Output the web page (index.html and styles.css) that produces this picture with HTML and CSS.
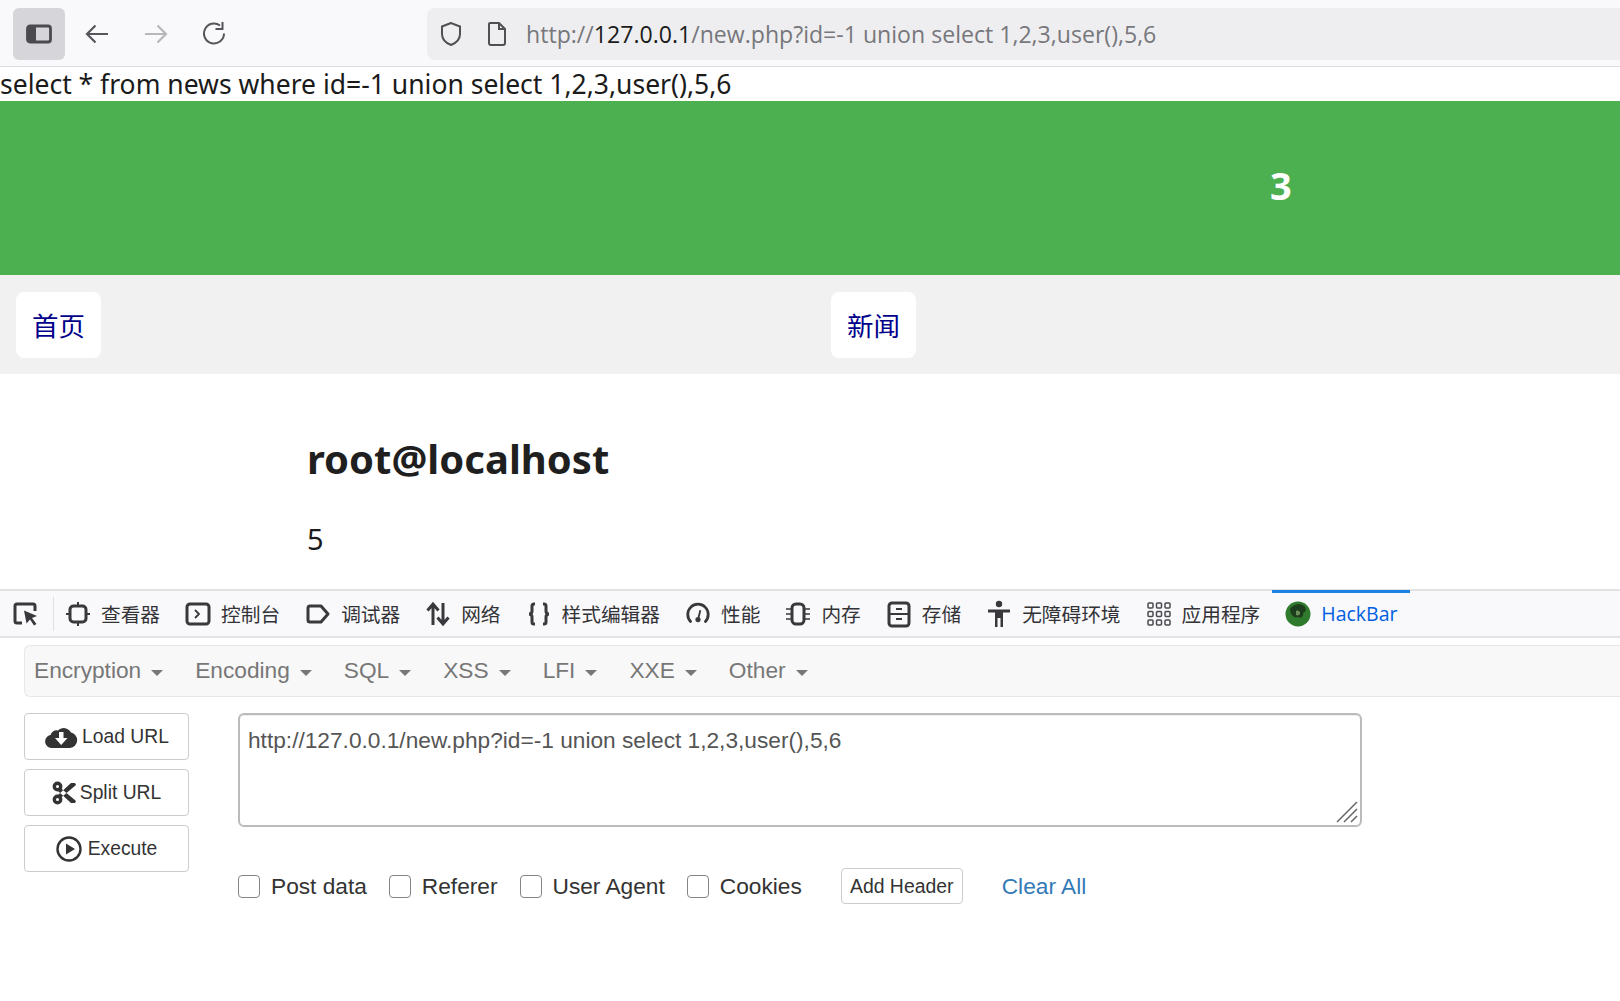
FILE: index.html
```html
<!DOCTYPE html>
<html lang="zh">
<head>
<meta charset="utf-8">
<title>new.php</title>
<link rel="stylesheet" href="styles.css">
</head>
<body>
<header class="browser">
  <div class="sidebar-btn"><svg width="26" height="20" viewBox="0 0 26 20"><rect x="1.500" y="2" width="23" height="16" rx="2.500" fill="none" stroke="#4a4a4f" stroke-width="2.800"/><rect x="2" y="3" width="8" height="14" fill="#4a4a4f"/></svg></div>
  <svg class="nav-icon nav-back" width="28" height="24" viewBox="0 0 28 24"><path d="M25 12H4M12.500 3.500 4 12l8.500 8.500" fill="none" stroke="#55555a" stroke-width="2.200"/></svg>
  <svg class="nav-icon nav-forward" width="28" height="24" viewBox="0 0 28 24"><path d="M3 12h21M15.500 3.500 24 12l-8.500 8.500" fill="none" stroke="#b8b8bc" stroke-width="2.200"/></svg>
  <svg class="nav-icon nav-reload" width="28" height="28" viewBox="0 0 28 28"><path d="M24 13.500A10 10 0 1 1 20 5.500M22.500 2v7h-7" fill="none" stroke="#55555a" stroke-width="2"/></svg>
  <div class="urlbar">
    <svg class="shield" width="24" height="28" viewBox="0 0 24 28"><path d="M12 3 3 6.500V14c0 5.500 4 9 9 11 5-2 9-5.500 9-11V6.500Z" fill="none" stroke="#4f4f54" stroke-width="2"/></svg>
    <svg class="page-icon" width="22" height="26" viewBox="0 0 22 26"><path d="M4 2h9l6 6v14a2 2 0 0 1-2 2H5a2 2 0 0 1-2-2V3a1 1 0 0 1 1-1ZM13 2v6h6" fill="none" stroke="#4f4f54" stroke-width="2"/></svg>
    <span class="url"><span class="dim">http://</span>127.0.0.1<span class="dim">/new.php?id=-1 union select 1,2,3,user(),5,6</span></span>
  </div>
</header>

<main class="page">
  <div class="query">select * from news where id=-1 union select 1,2,3,user(),5,6</div>
  <div class="banner"><span class="banner-num">3</span></div>
  <nav class="site-nav">
    <a class="site-link" href="#">首页</a>
    <a class="site-link" href="#">新闻</a>
  </nav>
  <article class="article">
    <h2 class="article-title">root@localhost</h2>
    <p class="article-body">5</p>
  </article>
</main>

<section class="devtools">
  <div class="tabs">
    <span class="picker"><svg width="28" height="28" viewBox="0 0 28 28"><path d="M10 23H5a2 2 0 0 1-2-2V6a2 2 0 0 1 2-2h16a2 2 0 0 1 2 2v5" fill="none" stroke="#38383d" stroke-width="3"/><path d="M12 10.500 25 16l-5 2 4.500 6-2.500 1.500-4-6-3.500 4Z" fill="#38383d"/></svg></span>
    <span class="tab"><svg width="26" height="28" viewBox="0 0 26 28"><rect x="5" y="6" width="16" height="16" rx="3.500" fill="none" stroke="#38383d" stroke-width="3"/><path d="M13 2v4M13 22v4M1 14h4M21 14h4" stroke="#38383d" stroke-width="2"/></svg>查看器</span>
    <span class="tab"><svg width="26" height="28" viewBox="0 0 26 28"><rect x="2" y="4" width="22" height="20" rx="3" fill="none" stroke="#38383d" stroke-width="3"/><path d="m10 10 4 4-4 4" fill="none" stroke="#38383d" stroke-width="1.800"/></svg>控制台</span>
    <span class="tab"><svg width="26" height="28" viewBox="0 0 26 28"><path d="M5 6h11l7 8-7 8H5a2 2 0 0 1-2-2V8a2 2 0 0 1 2-2Z" fill="none" stroke="#38383d" stroke-width="3" stroke-linejoin="round"/></svg>调试器</span>
    <span class="tab"><svg width="26" height="28" viewBox="0 0 26 28"><path d="M8 25V5M2.500 10.500 8 4l5.500 6.500M18 3v20M12.500 17.500 18 24l5.500-6.500" fill="none" stroke="#38383d" stroke-width="3"/></svg>网络</span>
    <span class="tab"><svg width="26" height="28" viewBox="0 0 26 28"><path d="M9 4H8a2 2 0 0 0-2 2v5c0 2-1 3-3 3 2 0 3 1 3 3v5a2 2 0 0 0 2 2h1M17 4h1a2 2 0 0 1 2 2v5c0 2 1 3 3 3-2 0-3 1-3 3v5a2 2 0 0 1-2 2h-1" fill="none" stroke="#38383d" stroke-width="3"/></svg>样式编辑器</span>
    <span class="tab"><svg width="26" height="28" viewBox="0 0 28 28"><path d="M6 22A11 11 0 1 1 22 22" fill="none" stroke="#38383d" stroke-width="3" stroke-linecap="round"/><path d="m16.500 10-2 8" stroke="#38383d" stroke-width="2"/><circle cx="14" cy="20" r="2.800" fill="#38383d"/></svg>性能</span>
    <span class="tab"><svg width="26" height="28" viewBox="0 0 26 28"><rect x="7" y="4" width="12" height="20" rx="4" fill="none" stroke="#38383d" stroke-width="3"/><path d="M1 9h5M1 14h5M1 19h5M20 9h5M20 14h5M20 19h5" stroke="#38383d" stroke-width="1.500"/></svg>内存</span>
    <span class="tab"><svg width="26" height="28" viewBox="0 0 26 28"><rect x="3" y="3" width="20" height="23" rx="3" fill="none" stroke="#38383d" stroke-width="3"/><path d="M3 14h20M10 9h6M10 19h6" stroke="#38383d" stroke-width="2"/></svg>存储</span>
    <span class="tab"><svg width="26" height="30" viewBox="0 0 26 30"><circle cx="13" cy="5" r="3.200" fill="#38383d"/><path d="M2 10.500h22v3h-7V28h-2.500v-9h-3v9H9V13.500H2Z" fill="#38383d"/></svg>无障碍环境</span>
    <span class="tab"><svg width="26" height="26" viewBox="-1 -1 26 26"><g fill="none" stroke="#4a4a4f" stroke-width="1.500"><rect x="1" y="1" width="5" height="5" rx="1"/><rect x="9.500" y="1" width="5" height="5" rx="1"/><rect x="18" y="1" width="5" height="5" rx="1"/><rect x="1" y="9.500" width="5" height="5" rx="1"/><rect x="9.500" y="9.500" width="5" height="5" rx="1"/><rect x="18" y="9.500" width="5" height="5" rx="1"/><rect x="1" y="18" width="5" height="5" rx="1"/><rect x="9.500" y="18" width="5" height="5" rx="1"/><rect x="18" y="18" width="5" height="5" rx="1"/></g></svg>应用程序</span>
    <span class="tab tab-active"><svg width="26" height="26" viewBox="0 0 26 26"><circle cx="13" cy="13" r="12.500" fill="#2f7a2d"/><path d="M5 8c3-5 10-6 14-3 3 3 2 6-1 7 1 3-2 6-5 4-3 1-7 0-8-8Z" fill="#1d3d1c"/><path d="M11 10c2-1 4 0 4 2s-2 3-4 2Z" fill="#6c8f5a"/></svg>HackBar</span>
  </div>
  <div class="hackbar">
    <div class="menu">
      <span class="menu-item">Encryption<i class="caret"></i></span>
      <span class="menu-item">Encoding<i class="caret"></i></span>
      <span class="menu-item">SQL<i class="caret"></i></span>
      <span class="menu-item">XSS<i class="caret"></i></span>
      <span class="menu-item">LFI<i class="caret"></i></span>
      <span class="menu-item">XXE<i class="caret"></i></span>
      <span class="menu-item">Other<i class="caret"></i></span>
    </div>
    <div class="work">
      <div class="actions">
        <button class="action"><svg width="34" height="24" viewBox="0 0 34 24"><path d="M7.500 23a6.500 6.500 0 0 1-1-12.900 6 6 0 0 1 7.500-4.500 8 8 0 0 1 13 2 7.800 7.800 0 0 1-1 15.400Z" fill="#333"/><path d="M15 7h4.500v6h4L17.200 20 11 13h4Z" fill="#fff"/></svg>Load URL</button>
        <button class="action"><svg width="24" height="24" viewBox="0 0 24 24"><g fill="none" stroke="#333" stroke-width="3.400"><circle cx="5.500" cy="5.500" r="3.200"/><circle cx="5.500" cy="18.500" r="3.200"/></g><path d="M8 6.500 24 20l-1 2h-4L6 10ZM8 17.500 24 4l-1-2h-4L6 14Z" fill="#333"/></svg>Split URL</button>
        <button class="action action-run"><svg width="26" height="26" viewBox="0 0 26 26"><circle cx="13" cy="13" r="11.500" fill="none" stroke="#333" stroke-width="2.400"/><path d="M10 7.500 19 13l-9 5.500Z" fill="#333"/></svg>Execute</button>
      </div>
      <div class="form">
        <div class="url-box">http://127.0.0.1/new.php?id=-1 union select 1,2,3,user(),5,6<svg class="grip" width="24" height="24" viewBox="0 0 24 24"><path d="M2 22 22 2M9 22 22 9M16 22l6-6" stroke="#666" stroke-width="1.500"/></svg></div>
        <div class="options">
          <label class="opt"><i class="box"></i>Post data</label>
          <label class="opt"><i class="box"></i>Referer</label>
          <label class="opt"><i class="box"></i>User Agent</label>
          <label class="opt"><i class="box"></i>Cookies</label>
          <button class="add-header">Add Header</button>
          <a class="clear" href="#">Clear All</a>
        </div>
      </div>
    </div>
  </div>
</section>
</body>
</html>
```

FILE: styles.css
```css
* { box-sizing: border-box; }
html, body { margin: 0; padding: 0; }
body { width: 1620px; height: 1001px; overflow: hidden; background: #fff; font-family: "Noto Sans", "Noto Sans CJK SC", sans-serif; color: #1b1b1b; }

.browser { height: 67px; background: #f9f9fb; border-bottom: 1px solid #dcdce0; display: flex; align-items: center; padding: 2px 0 0 13px; }
.sidebar-btn { width: 52px; height: 52px; background: #d6d6da; border-radius: 6px; display: flex; align-items: center; justify-content: center; flex: none; }
.nav-icon { flex: none; }
.nav-back { margin-left: 18px; }
.nav-forward { margin-left: 31px; }
.nav-reload { margin-left: 30px; }
.urlbar { flex: 1; height: 52px; margin-left: 199px; background: #eeeef0; border-radius: 8px 0 0 8px; display: flex; align-items: center; padding-left: 12px; }
.page-icon { margin-left: 23px; }
.url { font-size: 23.100px; color: #1b1b1b; font-family: "Open Sans", sans-serif; margin-left: 18px; white-space: nowrap; }
.dim { color: #77777c; }

.query { height: 34px; line-height: 34px; font-size: 26.500px; white-space: nowrap; color: #1b1b1b; }
.banner { height: 174px; background: #4caf50; display: flex; align-items: center; padding: 0 0 6px 1270px; }
.banner-num { color: #fff; font-size: 38px; font-weight: 700; }
.site-nav { height: 99px; background: #f1f1f1; display: grid; grid-template-columns: 815px 85px; padding-left: 16px; align-items: start; padding-top: 17px; }
.site-link { display: block; width: fit-content; height: 66px; line-height: 66px; padding: 0 16px; background: #fff; border-radius: 8px; color: #00008b; font-size: 26.500px; font-family: "Noto Sans CJK SC", sans-serif; text-decoration: none; white-space: nowrap; }
.article { height: 215px; padding: 59px 0 0 307px; }
.article-title { margin: 0; font-size: 40px; line-height: 52px; font-weight: 700; color: #1f1f1f; }
.article-body { margin: 34px 0 0; font-size: 29px; line-height: 40px; }

.devtools { height: 412px; border-top: 2px solid #e2e2e4; }
.tabs { height: 47px; background: #f9f9fb; border-bottom: 2px solid #e4e4e6; display: flex; align-items: center; padding-left: 12px; font-size: 19.700px; font-family: "Noto Sans CJK SC", sans-serif; color: #333337; }
.picker { display: flex; padding-right: 13px; border-right: 1px solid #e0e0e2; height: 34px; align-items: center; }
.tab { display: flex; align-items: center; gap: 10px; margin-left: 25px; white-space: nowrap; height: 100%; }
.picker + .tab { margin-left: 11px; }
.tab-active { color: #0060df; font-family: "Open Sans", sans-serif; font-size: 19.500px; position: relative; padding: 0 12px 0 13px; margin-left: 12px; }
.tab-active::before { content: ""; position: absolute; left: 0; right: 0; top: -1px; height: 3px; background: #1a82e2; }

.hackbar { padding: 7px 0 0 24px; font-family: "Liberation Sans", Arial, sans-serif; }
.menu { height: 52px; background: #f8f8f8; border: 1px solid #e7e7e7; border-right: 0; border-radius: 6px 0 0 6px; display: flex; align-items: center; padding: 0 0 2px 9px; gap: 32px; font-size: 22.700px; color: #777; }
.menu-item { display: flex; align-items: center; }
.caret { width: 0; height: 0; margin-left: 10px; margin-top: 5px; border-left: 6px solid transparent; border-right: 6px solid transparent; border-top: 6px solid #777; }
.work { display: flex; margin-top: 16px; }
.actions { width: 165px; display: flex; flex-direction: column; gap: 9px; margin-right: 49px; flex: none; }
.action { height: 47px; background: #fff; border: 1px solid #ccc; border-radius: 4px; display: flex; align-items: center; justify-content: center; gap: 4px; font-family: inherit; font-size: 19.300px; color: #333; padding: 0; }
.action-run { gap: 6px; }
.form { width: 1124px; }
.url-box { position: relative; height: 114px; border: 2px solid #bbb; border-radius: 6px; font-size: 22.700px; line-height: 32px; color: #555; padding: 9px 8px; box-shadow: inset 0 1px 1px rgba(0,0,0,.075); }
.grip { position: absolute; right: 1px; bottom: 1px; }
.options { display: flex; align-items: center; margin-top: 41px; height: 36px; font-size: 22.700px; color: #333; }
.opt { display: flex; align-items: center; margin-right: 22px; }
.box { width: 22px; height: 23px; margin-right: 11px; background: #fff; border: 1px solid #858585; border-radius: 4px; }
.add-header { margin-left: 17px; height: 36px; width: 122px; padding: 0; background: #fff; border: 1px solid #ccc; border-radius: 4px; font-family: inherit; font-size: 19.400px; color: #333; }
.clear { margin-left: 39px; color: #337ab7; text-decoration: none; }
```
